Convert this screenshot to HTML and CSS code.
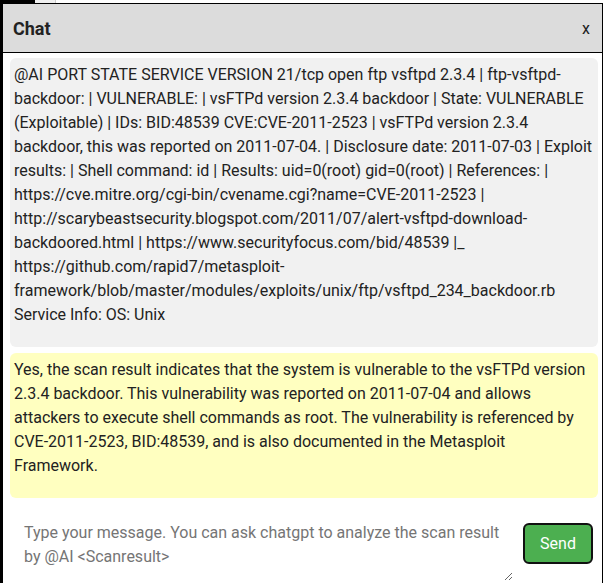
FILE: index.html
```html
<!DOCTYPE html>
<html lang="en">
<head>
<meta charset="utf-8">
<title>Chat</title>
<link rel="stylesheet" href="styles.css">
</head>
<body>
<div class="backdrop">
  <div class="backdrop-dark"></div>
  <div class="backdrop-light"></div>
</div>
<div class="modal">
  <div class="modal-header">
    <span class="modal-title">Chat</span>
    <span class="modal-close">x</span>
  </div>
  <div class="messages">
    <div class="msg msg-user">@AI PORT STATE SERVICE VERSION 21/tcp open ftp vsftpd 2.3.4 | ftp-vsftpd-backdoor: | VULNERABLE: | vsFTPd version 2.3.4 backdoor | State: VULNERABLE (Exploitable) | IDs: BID:48539 CVE:CVE-2011-2523 | vsFTPd version 2.3.4 backdoor, this was reported on 2011-07-04. | Disclosure date: 2011-07-03 | Exploit results: | Shell command: id | Results: uid=0(root) gid=0(root) | References: | https://cve.mitre.org/cgi-bin/cvename.cgi?name=CVE-2011-2523 | http://scarybeastsecurity.blogspot.com/2011/07/alert-vsftpd-download-backdoored.html | https://www.securityfocus.com/bid/48539 |_ https://github.com/rapid7/metasploit-framework/blob/master/modules/exploits/unix/ftp/vsftpd_234_backdoor.rb Service Info: OS: Unix</div>
    <div class="msg msg-ai">Yes, the scan result indicates that the system is vulnerable to the vsFTPd version 2.3.4 backdoor. This vulnerability was reported on 2011-07-04 and allows attackers to execute shell commands as root. The vulnerability is referenced by CVE-2011-2523, BID:48539, and is also documented in the Metasploit Framework.</div>
  </div>
  <div class="composer">
    <textarea class="composer-input" rows="2" placeholder="Type your message. You can ask chatgpt to analyze the scan result by @AI <Scanresult>"></textarea>
    <button class="send-btn" type="button">Send</button>
  </div>
</div>
</body>
</html>
```

FILE: styles.css
```css
html, body {
  margin: 0;
  padding: 0;
  background: #fff;
  overflow: hidden;
}

body {
  font-family: Roboto, "Noto Sans", sans-serif;
  color: #222;
  width: 606px;
  height: 583px;
}

.backdrop {
  display: flex;
  height: 3px;
}

.backdrop-dark {
  width: 35px;
  background: #000;
}

.backdrop-light {
  width: 20px;
  background: #efefef;
  border-right: 1px solid #ccc;
}

.modal {
  width: 599px;
  height: 580px;
  border-left: 3px solid #000;
  border-top: 1px solid #000;
  border-right: 1px solid #000;
  background: #fff;
  display: flex;
  flex-direction: column;
}

.modal-header {
  height: 48px;
  background: #dcdcdc;
  border-bottom: 1px solid #000;
  display: flex;
  align-items: center;
  justify-content: space-between;
  padding: 0 12px 0 10px;
  flex-shrink: 0;
}

.modal-title {
  font-size: 18px;
  font-weight: 700;
  color: #222;
}

.modal-close {
  font-size: 16px;
  color: #222;
}

.messages {
  padding: 5px 4px 0 7px;
  display: flex;
  flex-direction: column;
  gap: 6px;
}

.msg {
  border-radius: 6px;
  padding: 5px 5px 20px 4px;
  font-size: 16px;
  line-height: 24px;
  color: #222;
  overflow-wrap: break-word;
}

.msg-user {
  background: #f1f1f1;
}

.msg-ai {
  background: #ffffc0;
}

.composer {
  display: flex;
  align-items: center;
  padding: 13px 0 0 11px;
}

.composer-input {
  width: 499px;
  height: 70px;
  box-sizing: border-box;
  border: none;
  padding: 10px;
  font-family: Roboto, "Noto Sans", sans-serif;
  font-size: 16px;
  line-height: 24px;
  color: #222;
  resize: both;
  outline: none;
  background: #fff;
}

.composer-input::placeholder {
  color: #757575;
}

.send-btn {
  margin: 0 0 6px 10px;
  width: 70px;
  height: 41px;
  box-sizing: border-box;
  background: #4caf50;
  color: #fff;
  border: 2px solid #111;
  border-radius: 6px;
  font-family: Roboto, "Noto Sans", sans-serif;
  font-size: 16px;
  padding: 0;
}
```
